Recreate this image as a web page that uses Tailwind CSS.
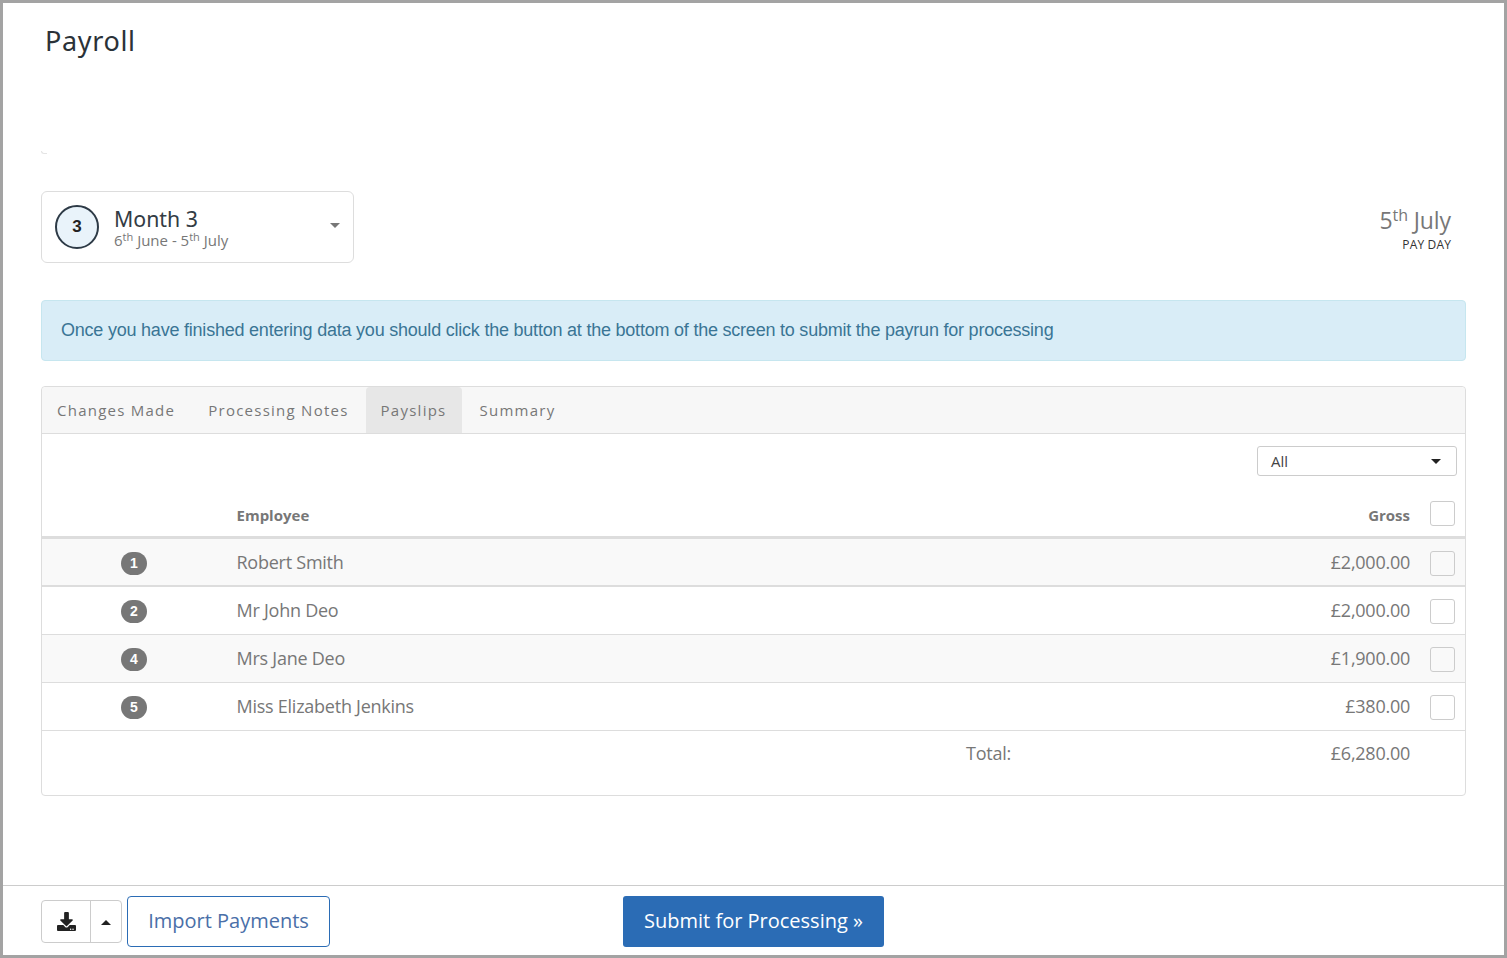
<!DOCTYPE html>
<html lang="en">
<head>
<meta charset="utf-8">
<title>Payroll</title>
<script src="https://cdn.jsdelivr.net/npm/@tailwindcss/browser@4"></script>
</head>
<body class="bg-white">
<div class="w-[1507px] h-[958px] border-[3px] border-[#a3a3a3] flex flex-col font-['Open_Sans',sans-serif] text-[#777] overflow-hidden">
  <main class="flex-1 px-[38px] min-h-0">
    <h1 class="ml-[4px] mt-[20px] h-[36px] leading-[36px] text-[27px] font-normal text-[#2b3238] tracking-[0.65px] font-['Noto_Sans',sans-serif]">Payroll</h1>
    <div class="mt-[92px] w-[6px] h-[3px] border-b border-l border-[#e4e4e4] rounded-bl-[4px]"></div>
    <section class="mt-[37px] flex justify-between items-start">
      <div class="w-[313px] h-[72px] border border-[#ddd] rounded-[6px] flex items-center pl-[13px] pr-[13px]">
        <div class="w-[44px] h-[44px] rounded-full border-2 border-[#2d3a46] bg-[#e9f3fa] flex items-center justify-center text-[#222] text-[17px] font-bold font-['Liberation_Sans',sans-serif]">3</div>
        <div class="ml-[15px] flex-1">
          <div class="text-[21.3px] leading-[24px] text-[#333c44] font-['Noto_Sans',sans-serif] mt-[2px]">Month 3</div>
          <div class="text-[15px] leading-[18px] text-[#777]">6<sup class="text-[11px] leading-none">th</sup> June - 5<sup class="text-[11px] leading-none">th</sup> July</div>
        </div>
        <div class="w-0 h-0 border-x-[5px] border-x-transparent border-t-[5px] border-t-[#777] mb-[3px]"></div>
      </div>
      <div class="text-right mr-[15px] mt-[13px]">
        <div class="text-[23px] leading-[32px] tracking-[-0.1px] text-[#777]">5<sup class="text-[16px] leading-none">th</sup> July</div>
        <div class="text-[12px] leading-[16px] tracking-[0.15px] text-[#333] mt-[1px]">PAY DAY</div>
      </div>
    </section>
    <div class="mt-[37px] h-[61px] rounded-[4px] bg-[#d9edf7] border border-[#c6e6ef] flex items-center pl-[19px] text-[18px] tracking-[-0.22px] text-[#3a7595] font-['Liberation_Sans',sans-serif]">Once you have finished entering data you should click the button at the bottom of the screen to submit the payrun for processing</div>
    <section class="mt-[25px] h-[410px] border border-[#ddd] rounded-[4px] flex flex-col">
      <nav class="h-[47px] bg-[#f7f7f7] border-b border-[#ddd] flex text-[15px] tracking-[1.25px] text-[#777] rounded-t-[4px]">
        <a class="pl-[15px] pr-[16px] flex items-center">Changes Made</a>
        <a class="pl-[17px] pr-[17px] flex items-center">Processing Notes</a>
        <a class="px-[15px] flex items-center bg-[#e7e7e7] rounded-t-[4px]">Payslips</a>
        <a class="pl-[18px] flex items-center">Summary</a>
      </nav>
      <div class="flex justify-end pr-[8px] pt-[12px]">
        <div class="w-[200px] h-[30px] border border-[#ccc] rounded-[3px] flex items-center justify-between pl-[13px] pr-[15px] text-[15px] text-[#444]">
          <span>All</span>
          <span class="w-0 h-0 border-x-[5px] border-x-transparent border-t-[5px] border-t-[#222]"></span>
        </div>
      </div>
      <div class="grid grid-cols-[194.5px_1fr_1fr_1fr_35px] h-[63px] border-b-[3px] border-[#ddd] items-end">
        <div></div>
        <div class="text-[15px] font-bold text-[#777] leading-[20px] pb-[11px]">Employee</div>
        <div></div>
        <div class="text-[15px] font-bold text-[#777] text-right leading-[20px] pb-[11px] pr-[20px]">Gross</div>
        <div class="pb-[10px]"><div class="w-[25px] h-[25px] border border-[#ccc] rounded-[3px] bg-white"></div></div>
      </div>
      <div class="grid grid-cols-[194.5px_1fr_1fr_1fr_35px] h-[48px] border-b-2 border-[#ddd] items-center bg-[#f9f9f9] text-[18px] tracking-[-0.25px]">
        <div class="flex justify-center pr-[11px]"><span class="w-[26px] h-[23px] rounded-full bg-[#777] text-white text-[14px] font-bold flex items-center justify-center mt-[2px] font-['Liberation_Sans',sans-serif]">1</span></div>
        <div>Robert Smith</div><div></div>
        <div class="text-right pr-[20px]">£2,000.00</div>
        <div><div class="w-[25px] h-[25px] border border-[#ccc] rounded-[3px] mt-[2px]"></div></div>
      </div>
      <div class="grid grid-cols-[194.5px_1fr_1fr_1fr_35px] h-[48px] border-b border-[#ddd] items-center text-[18px] tracking-[-0.25px]">
        <div class="flex justify-center pr-[11px]"><span class="w-[26px] h-[23px] rounded-full bg-[#777] text-white text-[14px] font-bold flex items-center justify-center mt-[2px] font-['Liberation_Sans',sans-serif]">2</span></div>
        <div>Mr John Deo</div><div></div>
        <div class="text-right pr-[20px]">£2,000.00</div>
        <div><div class="w-[25px] h-[25px] border border-[#ccc] rounded-[3px] mt-[2px]"></div></div>
      </div>
      <div class="grid grid-cols-[194.5px_1fr_1fr_1fr_35px] h-[48px] border-b border-[#ddd] items-center bg-[#f9f9f9] text-[18px] tracking-[-0.25px]">
        <div class="flex justify-center pr-[11px]"><span class="w-[26px] h-[23px] rounded-full bg-[#777] text-white text-[14px] font-bold flex items-center justify-center mt-[2px] font-['Liberation_Sans',sans-serif]">4</span></div>
        <div>Mrs Jane Deo</div><div></div>
        <div class="text-right pr-[20px]">£1,900.00</div>
        <div><div class="w-[25px] h-[25px] border border-[#ccc] rounded-[3px] mt-[2px]"></div></div>
      </div>
      <div class="grid grid-cols-[194.5px_1fr_1fr_1fr_35px] h-[48px] border-b border-[#ddd] items-center text-[18px] tracking-[-0.25px]">
        <div class="flex justify-center pr-[11px]"><span class="w-[26px] h-[23px] rounded-full bg-[#777] text-white text-[14px] font-bold flex items-center justify-center mt-[2px] font-['Liberation_Sans',sans-serif]">5</span></div>
        <div>Miss Elizabeth Jenkins</div><div></div>
        <div class="text-right pr-[20px]">£380.00</div>
        <div><div class="w-[25px] h-[25px] border border-[#ccc] rounded-[3px] mt-[2px]"></div></div>
      </div>
      <div class="flex h-[47px] items-center text-[18px] tracking-[-0.25px] pr-[55px] pb-[2px]">
        <div class="ml-[924px]">Total:</div>
        <div class="ml-auto">£6,280.00</div>
      </div>
    </section>
  </main>
  <footer class="h-[70px] border-t border-[#ccc] pl-[38px] flex items-center">
    <div class="w-[81px] h-[43px] border border-[#ccc] rounded-[4px] flex mt-[1px]">
      <div class="w-[49px] border-r border-[#ccc] flex items-center justify-center">
        <svg viewBox="0 0 512 512" class="w-[19px] h-[19px]"><path fill="#222" d="M216 0h80c13.3 0 24 10.7 24 24v168h87.7c17.8 0 26.7 21.5 14.1 34.1L269.7 378.3c-7.5 7.5-19.8 7.5-27.3 0L90.1 226.1c-12.6-12.6-3.7-34.1 14.1-34.1H192V24c0-13.3 10.7-24 24-24zm296 376v112c0 13.3-10.7 24-24 24H24c-13.3 0-24-10.7-24-24V376c0-13.3 10.7-24 24-24h146.7l49 49c20.1 20.1 52.5 20.1 72.6 0l49-49H488c13.3 0 24 10.7 24 24zm-124 88c0-11-9-20-20-20s-20 9-20 20 9 20 20 20 20-9 20-20zm64 0c0-11-9-20-20-20s-20 9-20 20 9 20 20 20 20-9 20-20z"/></svg>
      </div>
      <div class="flex-1 flex items-center justify-center">
        <span class="w-0 h-0 border-x-[5px] border-x-transparent border-b-[5px] border-b-[#222] mt-[2px]"></span>
      </div>
    </div>
    <button class="ml-[5px] mt-[2px] w-[203px] h-[51px] border border-[#2b6cb5] rounded-[4px] text-[20px] text-[#4a6fa8] bg-white pb-[2px]">Import Payments</button>
    <button class="ml-[293px] mt-[2px] w-[261px] h-[51px] rounded-[3px] bg-[#2b6cb5] text-[20px] text-white pb-[2px]">Submit for Processing »</button>
  </footer>
</div>
</body>
</html>
